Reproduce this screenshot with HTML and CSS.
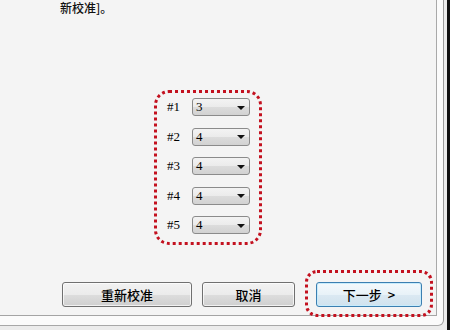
FILE: index.html
```html
<!DOCTYPE html>
<html lang="zh-CN">
<head>
    <meta charset="UTF-8">
    <title>校准</title>
    <link rel="stylesheet" href="styles.css">
</head>
<body>
    <div class="screen">
        <div class="frame">
            <div class="panel">
                <p class="note">新校准]。</p>

                <div class="mark group">
                    <span class="label">#1</span>
                    <div class="combo"><span>3</span><i class="arrow"></i></div>
                    <span class="label">#2</span>
                    <div class="combo"><span>4</span><i class="arrow"></i></div>
                    <span class="label">#3</span>
                    <div class="combo"><span>4</span><i class="arrow"></i></div>
                    <span class="label">#4</span>
                    <div class="combo"><span>4</span><i class="arrow"></i></div>
                    <span class="label">#5</span>
                    <div class="combo"><span>4</span><i class="arrow"></i></div>
                </div>

                <div class="actions">
                    <button class="btn btn-wide">重新校准</button>
                    <button class="btn btn-cancel">取消</button>
                    <div class="mark mark-next">
                        <button class="btn btn-default">下一步&nbsp;&nbsp;&gt;</button>
                    </div>
                </div>
            </div>
        </div>
        <div class="edge"></div>
    </div>
</body>
</html>
```

FILE: styles.css
```css
:root {
    --panel-bg: #f4f4f4;
    --frame-bg: #fbfbfb;
    --mark-red: #c3111f;
    --btn-border: #707070;
    --text-color: #111;
}

* {
    box-sizing: border-box;
}

body {
    margin: 0;
    width: 450px;
    height: 330px;
    overflow: hidden;
    background-color: #ececec;
    font-family: "Noto Sans CJK SC", "Noto Sans", sans-serif;
    color: var(--text-color);
}

.screen {
    display: flex;
    justify-content: space-between;
    height: 330px;
}

.frame {
    width: 444px;
    height: 326px;
    background-color: var(--frame-bg);
    border-right: 1px solid #9c9c9c;
    border-bottom: 1px solid #a8a8a8;
    border-bottom-right-radius: 6px;
}

.panel {
    width: 437px;
    height: 316px;
    background-color: var(--panel-bg);
    border-right: 1px solid #a9a9a9;
    border-bottom: 1px solid #a4a4a4;
}

.edge {
    width: 3px;
    background-color: #111;
}

.note {
    margin: 0;
    padding-left: 60px;
    font-size: 12px;
    line-height: 15px;
    font-weight: 500;
}

/* 红色虚线标注框 */
.mark {
    border: 3px dotted var(--mark-red);
}

.group {
    display: grid;
    grid-template-columns: 25px 58px;
    grid-auto-rows: 18px;
    row-gap: 11.5px;
    align-items: center;
    width: 108px;
    height: 155px;
    margin: 75px 0 0 154px;
    padding: 5px 0 0 10px;
    border-radius: 15px;
}

.label {
    font-family: "Liberation Serif", "DejaVu Serif", serif;
    font-size: 13px;
    line-height: 18px;
    color: #000;
}

.combo {
    display: flex;
    align-items: center;
    justify-content: space-between;
    height: 18px;
    padding: 0 4px 0 3px;
    border: 1px solid #8b8b8b;
    border-radius: 3px;
    background: linear-gradient(#f3f3f3 0%, #ebebeb 50%, #dcdcdc 51%, #d2d2d2 100%);
    font-family: "Liberation Serif", "DejaVu Serif", serif;
    font-size: 13px;
    line-height: 16px;
    color: #000;
}

.arrow {
    width: 0;
    height: 0;
    border-left: 4px solid transparent;
    border-right: 4px solid transparent;
    border-top: 4px solid #111;
    margin-top: 1px;
}

.actions {
    display: flex;
    align-items: flex-start;
    gap: 10px;
    margin-top: 25px;
    padding-left: 62px;
}

.btn {
    height: 25px;
    padding: 0;
    border: 1px solid var(--btn-border);
    border-radius: 3px;
    background: linear-gradient(#f2f2f2 0%, #ebebeb 50%, #dddddd 51%, #cfcfcf 100%);
    box-shadow: inset 0 0 0 1px rgba(255, 255, 255, 0.7);
    font-family: "Noto Sans CJK SC", "Noto Sans", sans-serif;
    font-size: 13px;
    font-weight: 500;
    line-height: 22px;
    color: #000;
}

.btn-wide {
    width: 130px;
    margin-top: 12px;
}

.btn-cancel {
    width: 93px;
    margin-top: 12px;
}

.mark-next {
    padding: 9px 8px 7px 8px;
    border-radius: 12px;
}

.btn-default {
    display: block;
    width: 106px;
    border-color: #3c7fb1;
    box-shadow: inset 0 0 0 1px #c8ecfc;
    background: linear-gradient(#f4f9fc 0%, #e8f2f8 50%, #dbe9f2 51%, #d0e2ee 100%);
}
```
